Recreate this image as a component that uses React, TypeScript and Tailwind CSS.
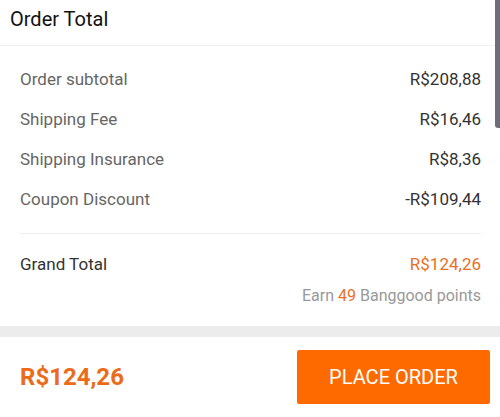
const rows = [
  { label: "Order subtotal", value: "R$208,88" },
  { label: "Shipping Fee", value: "R$16,46" },
  { label: "Shipping Insurance", value: "R$8,36" },
  { label: "Coupon Discount", value: "-R$109,44" },
];

export default function App() {
  return (
    <div
      className="relative h-[417px] w-[500px] overflow-hidden bg-white"
      style={{ fontFamily: "Roboto, 'Liberation Sans', sans-serif" }}
    >
      {/* header */}
      <div className="flex h-[45px] items-start pl-[10px] pt-[6px]">
        <h1 className="text-[20px] leading-[26px] text-[#111]">Order Total</h1>
      </div>
      <div className="h-px bg-[#f0f0f0]"></div>

      {/* summary */}
      <div className="pl-[20px] pr-[19px] pt-[14px]">
        {rows.map((r) => (
          <div key={r.label} className="flex h-[40px] items-center justify-between text-[17px]">
            <span className="text-[#666]">{r.label}</span>
            <span className="text-[#333]">{r.value}</span>
          </div>
        ))}
        <div className="mt-[13px] h-px bg-[#ededed]"></div>
        <div className="mt-[11px] flex h-[40px] items-center justify-between text-[17px]">
          <span className="text-[#333]">Grand Total</span>
          <span className="text-[#e8701f]">R$124,26</span>
        </div>
        <div className="flex h-[26px] items-center justify-end pb-[5px] text-[16px] text-[#999]">
          <span>
            Earn <span className="text-[#e8701f]">49</span> Banggood points
          </span>
        </div>
      </div>

      <div className="mt-[15px] h-[11px] bg-[#ececec]"></div>

      {/* footer */}
      <div className="flex h-[80px] items-center justify-between pl-[20px] pr-[10px]">
        <span className="text-[24px] font-bold text-[#ec6a18]">R$124,26</span>
        <button className="flex h-[54px] w-[193px] items-center justify-center rounded-[2px] bg-[#ff6a00] text-[20px] text-white">
          PLACE ORDER
        </button>
      </div>

      {/* scrollbar overlay */}
      <div className="absolute right-0 top-0 h-[128px] w-[5px] rounded-bl-[3px] bg-[#6e6d7a]"></div>
    </div>
  );
}
